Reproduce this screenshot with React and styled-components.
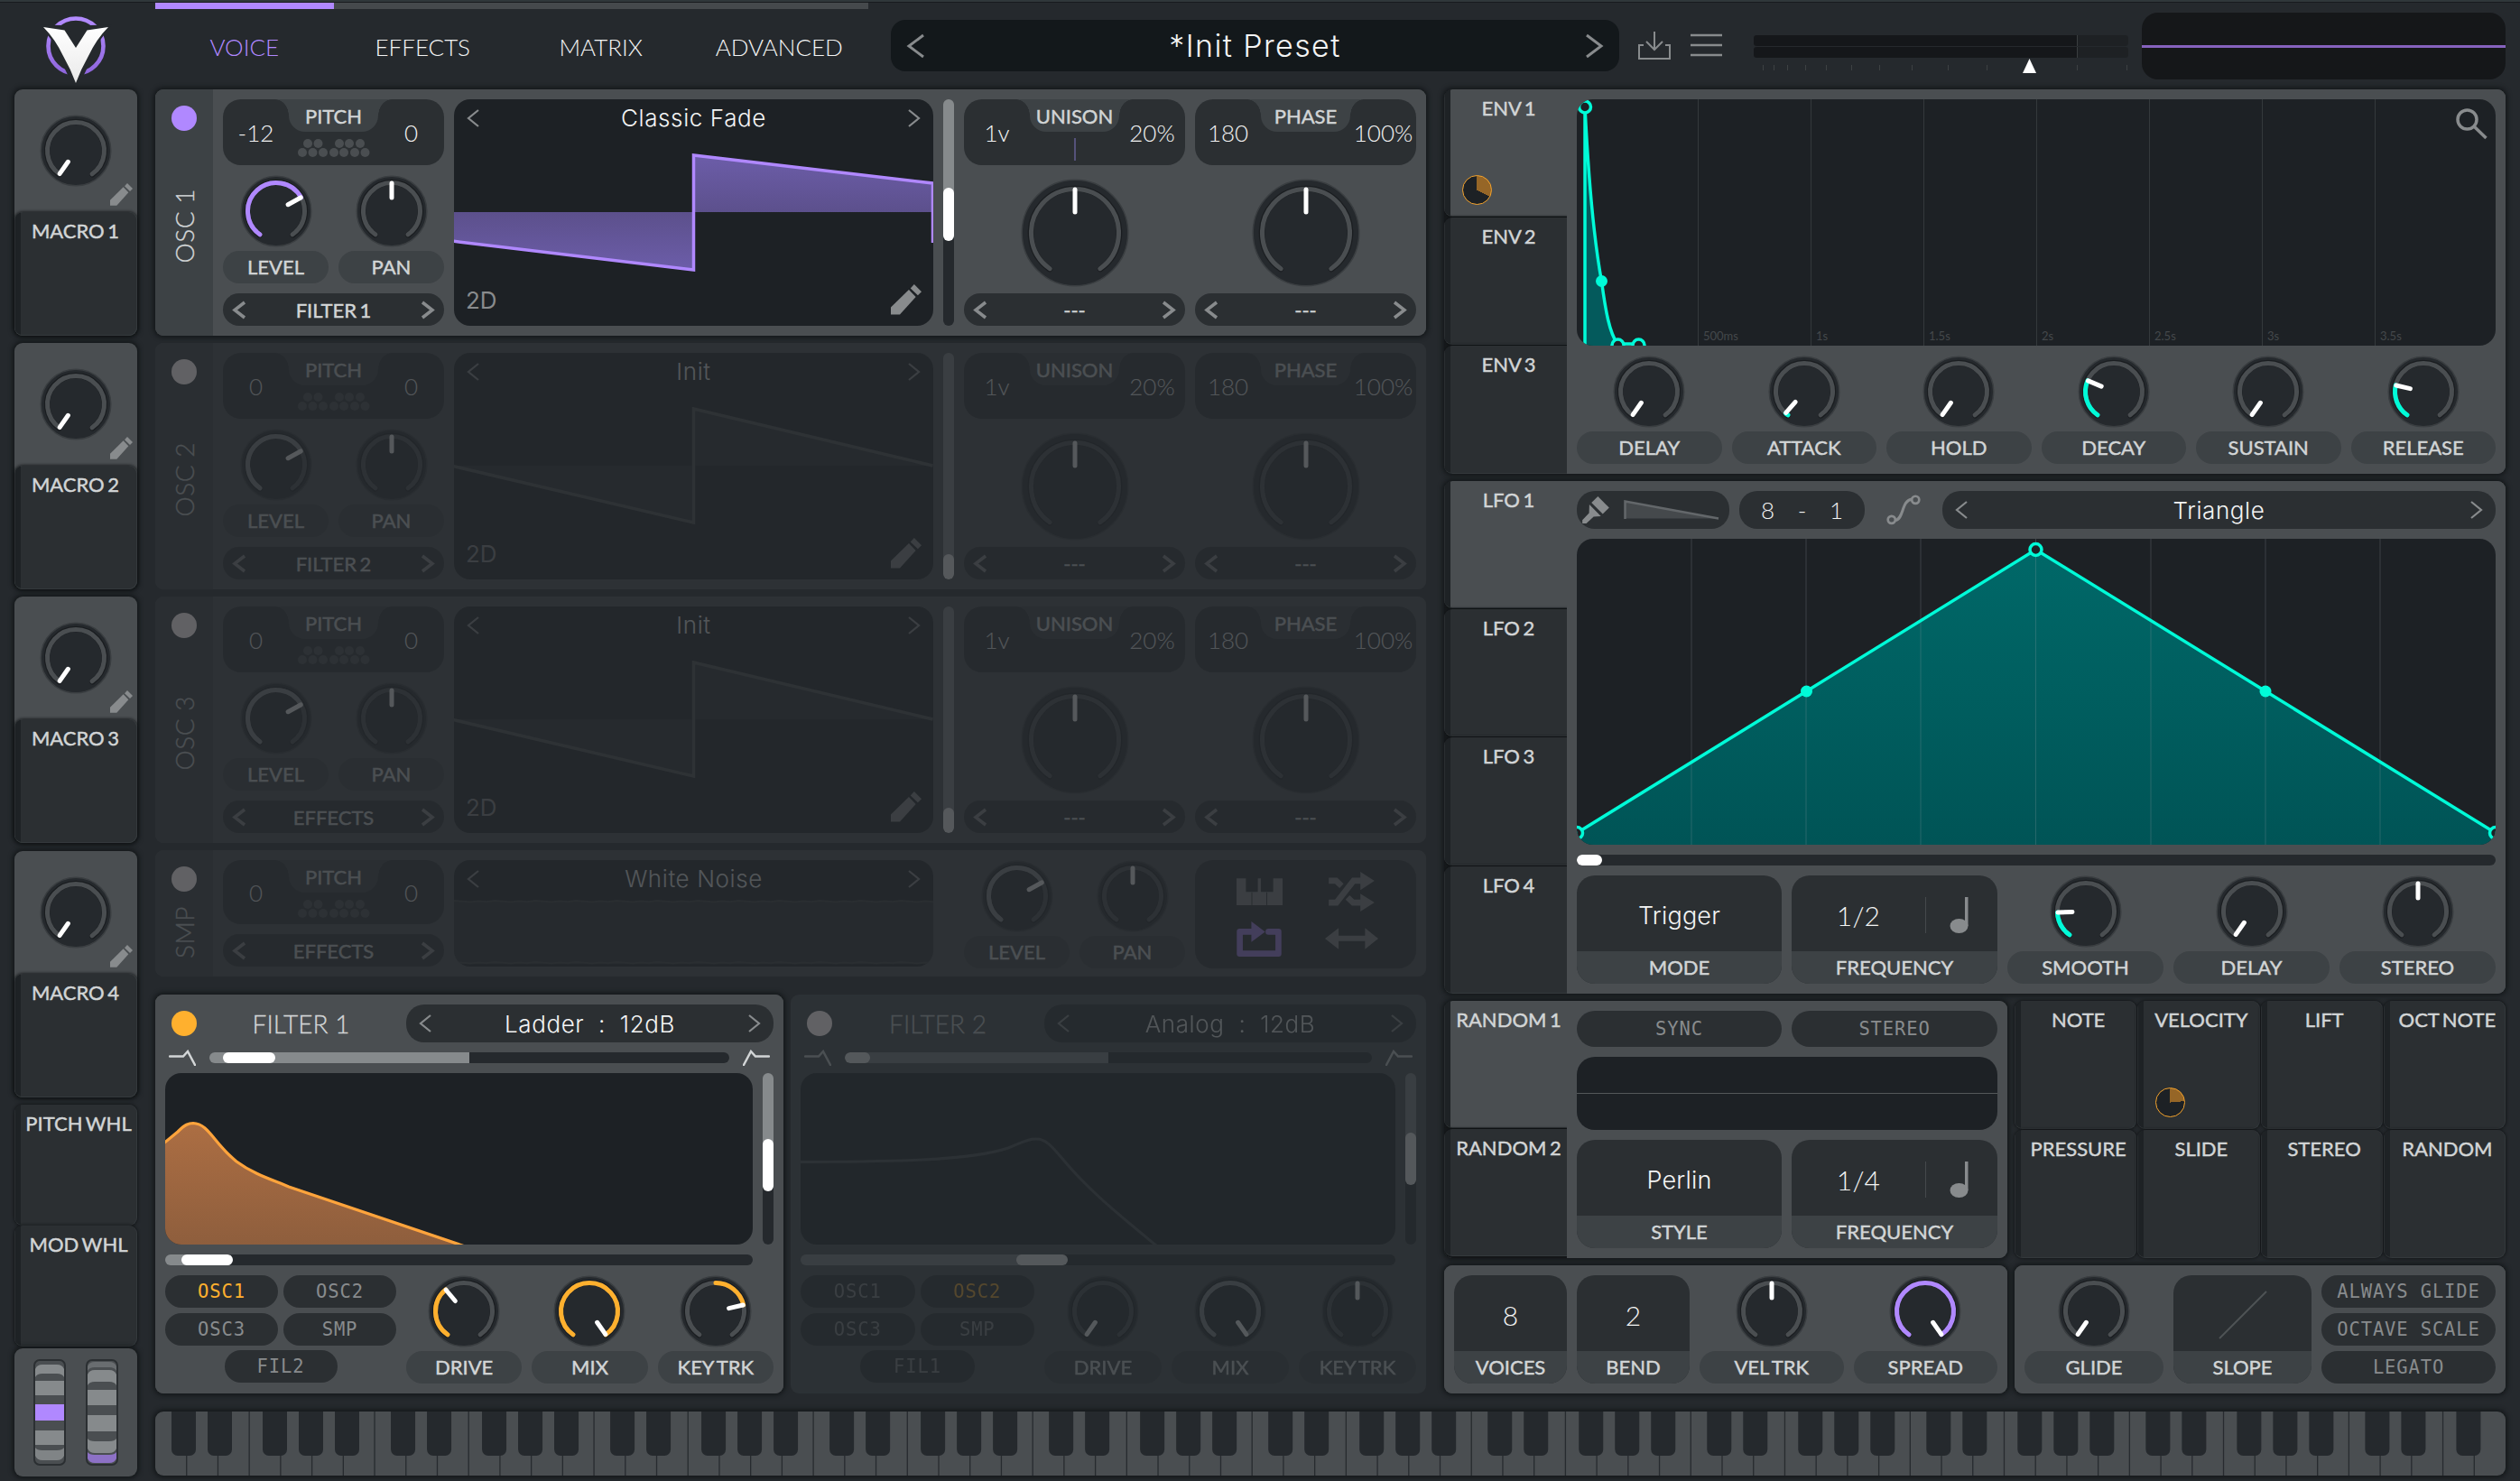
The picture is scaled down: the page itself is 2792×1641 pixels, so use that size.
import React from "react";
import styled, { createGlobalStyle, css } from "styled-components";

const colors = {
  background: "#25292d",
  panel: "#4a4e51",
  side: "#3d4245",
  body: "#2b2f32",
  display: "#1d2125",
  label: "#d2d5d6",
  text: "#f3f4f4",
  icon: "#888b8d",
  purple: "#b088ff",
  orange: "#ffb02e",
  teal: "#00fbd8",
};

const fonts = {
  label: `Lato, "Liberation Sans", sans-serif`,
  value: `Inter, "Liberation Sans", sans-serif`,
  mono: `"DejaVu Sans Mono", "Liberation Mono", monospace`,
};

const GlobalStyle = createGlobalStyle`
  * {
    box-sizing: border-box;
  }
  body {
    margin: 0;
    background: ${colors.background};
    color: ${colors.label};
    font-family: ${fonts.label};
  }
  svg {
    display: block;
    flex: none;
  }
`;

// Lato has no medium cut, a hairline stroke stands in for it
const labelText = css`
  font-family: ${fonts.label};
  font-size: 22px;
  font-weight: 400;
  letter-spacing: 0;
  word-spacing: -2px;
  -webkit-text-stroke: 0.45px currentColor;
  white-space: nowrap;
`;

const SApp = styled.div`
  width: 2792px;
  height: 1641px;
  overflow: hidden;
  background: ${colors.background};
  border-top: 2px solid #30373a;
`;

/* header */

const SHeader = styled.header`
  display: flex;
  align-items: flex-start;
  height: 97px;
  border-top: 1px solid #181b1e;
`;

const SLogo = styled.div`
  width: 172px;
  padding: 11px 0 0 44px;
`;

const STabs = styled.nav`
  display: flex;
  width: 790px;
`;

const STab = styled.div`
  flex: 1;
  height: 96px;
  border-top: 7px solid ${(p) => (p.$active ? colors.purple : "#45494c")};
  color: ${(p) => (p.$active ? colors.purple : colors.text)};
  font-size: 26px;
  font-weight: 300;
  line-height: 84px;
  text-align: center;
`;

const SPreset = styled.div`
  display: flex;
  align-items: center;
  justify-content: space-between;
  width: 807px;
  height: 57px;
  margin: 19px 0 0 25px;
  padding: 0 17px;
  border-radius: 16px;
  background: #13181b;
  color: ${colors.text};
  font-family: ${fonts.value};
  font-size: 34px;
  font-weight: 300;
  letter-spacing: 1.4px;
`;

const SHeaderIcons = styled.div`
  display: flex;
  gap: 22px;
  margin: 32px 35px 0 21px;
`;

const SMeter = styled.div`
  width: 415px;
  margin-top: 36px;
`;

const SMeterBar = styled.div`
  height: 12px;
  margin-bottom: 1px;
  border-radius: 3px;
  background: linear-gradient(90deg, #15171a 358px, #3a3e40 358px, #3a3e40 359px, #1e2124 359px);
`;

const SScope = styled.div`
  display: flex;
  align-items: center;
  width: 403px;
  height: 74px;
  margin: 11px 0 0 15px;
  border-radius: 18px;
  background: #151719;
`;

const SScopeLine = styled.div`
  width: 100%;
  height: 3px;
  background: #8562bd;
`;

/* frame */

const SFrame = styled.main`
  display: flex;
  gap: 20px;
  padding: 0 16px;
`;

const SMacros = styled.div`
  width: 136px;
`;

const SWork = styled.div`
  width: 2604px;
`;

const SColumns = styled.div`
  display: flex;
  gap: 20px;
  height: 1445px;
`;

const SVoice = styled.div`
  display: flex;
  flex-direction: column;
  gap: 8px;
  width: 1408px;
`;

const SMods = styled.div`
  display: flex;
  flex-direction: column;
  gap: 8px;
  width: 1176px;
`;

const SRow = styled.div`
  display: flex;
  gap: ${(p) => p.$gap ?? 11}px;
  margin-top: ${(p) => p.$top ?? 0}px;
`;

const SStack = styled.div`
  display: flex;
  flex-direction: column;
  gap: 11px;
  width: ${(p) => (p.$w ? `${p.$w}px` : "auto")};
`;

const SPanel = styled.section`
  display: flex;
  width: ${(p) => (p.$w ? `${p.$w}px` : "100%")};
  height: ${(p) => p.$h}px;
  overflow: hidden;
  border-radius: 9px;
  background: ${colors.panel};
  box-shadow: 0 0 5px 2px rgba(14, 17, 19, 0.75);
`;

const SContent = styled.div`
  display: flex;
  flex-direction: column;
  gap: 11px;
  flex: 1;
  padding: 11px;
  background: ${colors.panel};
`;

const SMacro = styled.div`
  height: 273px;
  margin-bottom: ${(p) => p.$gap}px;
  border-radius: 9px;
  background: ${colors.panel};
  box-shadow: 0 0 5px 2px rgba(14, 17, 19, 0.75);
`;

const SMacroKnob = styled.div`
  display: flex;
  align-items: flex-end;
  justify-content: flex-end;
  height: 136px;
  padding: 0 5px 7px 28px;
`;

const SMacroDial = styled.div`
  margin: 0 -2px 21px 0;
`;

const STile = styled.div`
  display: flex;
  flex-direction: column;
  justify-content: space-between;
  height: ${(p) => p.$h}px;
  padding: 8px 0 12px ${(p) => (p.$flush ? 0 : 7)}px;
  border-radius: 9px;
  border-right: 1px solid #34393c;
  border-bottom: 1px solid #34393c;
  background: linear-gradient(
    90deg,
    #2a2e31 1px,
    #1e2225 1px,
    #1e2225 7px,
    ${(p) => (p.$active ? colors.panel : colors.body)} 7px
  );
  box-shadow: 0 0 3px 1px rgba(14, 17, 19, 0.7);
  line-height: 26px;
  text-align: center;
  ${labelText}
`;

const STabColumn = styled.div`
  display: flex;
  flex-direction: column;
  gap: 1px;
  width: 136px;
  background: #171a1d;

  ${STile} {
    border-radius: 9px 0 0 9px;
    border-right: ${(p) => (p.$joined ? "0" : "1px solid #34393c")};
  }
`;

const SPie = styled.div`
  width: 33px;
  height: 33px;
  margin-left: 13px;
  border: 1.5px solid #f5a32c;
  border-radius: 50%;
  background: conic-gradient(#966627 ${(p) => p.$angle}deg, ${colors.display} 0);
`;

const SModGrid = styled.div`
  display: grid;
  grid-template-columns: repeat(4, 1fr);
  gap: 1px;
  width: 544px;
`;

const SWheels = styled.div`
  display: flex;
  gap: 22px;
  height: 142px;
  margin-top: 2px;
  padding: 12px 21px;
  border-radius: 9px;
  background: ${colors.panel};
  box-shadow: 0 0 5px 2px rgba(14, 17, 19, 0.75);
`;

/* controls */

const SSlot = styled.div`
  display: grid;
  width: ${(p) => (p.$w ? `${p.$w}px` : "100%")};

  > * {
    grid-area: 1 / 1;
  }
`;

const SFade = styled.div`
  opacity: ${(p) => (p.$off ? 0.22 : 1)};

  ${SPanel} {
    ${(p) => p.$off && "box-shadow: none;"}
  }
`;

const SPower = styled.div`
  width: 28px;
  height: 28px;
  margin: 18px;
  border-radius: 50%;
  background: ${(p) => p.$color};
  z-index: 1;
`;

const SSide = styled.div`
  display: flex;
  align-items: center;
  justify-content: center;
  width: 64px;
  padding-top: ${(p) => p.$push}px;
  background: ${colors.side};
`;

const SSideText = styled.span`
  writing-mode: vertical-rl;
  transform: rotate(180deg);
  font-size: 28px;
  font-weight: 300;
  line-height: 34px;
  letter-spacing: 0.5px;
  -webkit-text-stroke: 0.3px currentColor;
`;

const SPill = styled.div`
  width: 100%;
  height: 36px;
  border-radius: 18px;
  background: ${colors.side};
  line-height: 36px;
  text-align: center;
  ${labelText}
`;

const SKnobCell = styled.div`
  display: flex;
  flex: 1;
  flex-direction: column;
  align-items: center;
  gap: 4px;
`;

const SBigKnob = styled.div`
  display: flex;
  justify-content: center;
  height: 120px;
  margin: 4px 0 -4px;
`;

const valueText = css`
  color: ${colors.text};
  font-family: ${fonts.value};
  font-size: 26px;
  font-weight: 300;
  letter-spacing: 0.6px;
`;

const SSelector = styled.div`
  display: flex;
  align-items: center;
  justify-content: space-between;
  flex: ${(p) => (p.$grow ? 1 : "none")};
  height: ${(p) => p.$h ?? 36}px;
  padding: 0 ${(p) => (p.$value ? 13 : 10)}px;
  border-radius: 20px;
  background: ${(p) => (p.$bare ? "transparent" : colors.body)};
  ${(p) => (p.$value ? valueText : labelText)}
  white-space: pre;
`;

const SValueBox = styled.div`
  display: grid;
  grid-template-columns: 73px 99px 73px;
  height: ${(p) => p.$h}px;
  border-radius: 20px;
  background: ${colors.body};
  color: ${colors.text};
  font-size: 26px;
  font-weight: 300;
  line-height: ${(p) => p.$h + 1}px;
  text-align: center;
`;

const SNotch = styled.div`
  display: flex;
  flex-direction: column;
  align-items: center;
  gap: 7px;
`;

const SNotchLabel = styled.div`
  display: flex;
  justify-content: center;
  width: 99px;
  height: 36px;
  border-radius: 0 0 18px 18px;
  background: ${colors.side};
  color: ${colors.label};
  line-height: 37px;
  ${labelText}

  &::before,
  &::after {
    content: "";
    flex: none;
    width: 15px;
    height: 18px;
  }
  &::before {
    margin-left: -15px;
    margin-right: auto;
    background: radial-gradient(ellipse 15px 18px at 0 100%, transparent 97%, ${colors.side} 100%);
  }
  &::after {
    margin-right: -15px;
    margin-left: auto;
    background: radial-gradient(ellipse 15px 18px at 100% 100%, transparent 97%, ${colors.side} 100%);
  }
`;

const SUnisonTick = styled.div`
  width: 2px;
  height: 25px;
  background: #55527a;
`;

const SDisplay = styled.div`
  display: grid;
  flex: none;
  width: ${(p) => (p.$w ? `${p.$w}px` : "100%")};
  height: ${(p) => p.$h}px;
  overflow: hidden;
  border-radius: 18px;
  background: ${colors.display};

  > * {
    grid-area: 1 / 1;
  }
`;

const SDisplayFrame = styled.div`
  display: flex;
  flex-direction: column;
  justify-content: space-between;
  z-index: 1;
`;

const SDisplayFoot = styled.div`
  display: flex;
  align-items: center;
  justify-content: space-between;
  padding: 0 13px;
  margin-bottom: 12px;
  color: ${colors.icon};
  font-family: ${fonts.value};
  font-size: 26px;
`;

const SRail = styled.div`
  flex: ${(p) => (p.$vertical || p.$w ? "none" : 1)};
  width: ${(p) => (p.$vertical ? "12px" : p.$w ? `${p.$w}px` : "auto")};
  height: ${(p) => (p.$vertical ? "auto" : "12px")};
  border-radius: 6px;
  overflow: hidden;
  background: linear-gradient(
    ${(p) => (p.$vertical ? 180 : 90)}deg,
    #868a8c ${(p) => p.$fill}px,
    ${colors.background} ${(p) => p.$fill}px
  );
`;

const SThumb = styled.div`
  width: ${(p) => (p.$vertical ? 12 : p.$size)}px;
  height: ${(p) => (p.$vertical ? p.$size : 12)}px;
  margin: ${(p) => (p.$vertical ? `${p.$at}px 0 0` : `0 0 0 ${p.$at}px`)};
  border-radius: 6px;
  background: #fff;
`;

const SSampleButtons = styled.div`
  display: grid;
  grid-template-columns: 1fr 1fr;
  place-items: center;
  width: 245px;
  padding: 8px 20px;
  border-radius: 20px;
  background: ${colors.body};
`;

const SFilterHead = styled.div`
  display: flex;
  align-items: center;
  gap: 11px;
`;

const SFilterTitle = styled.div`
  width: ${(p) => p.$w}px;
  padding-left: 45px;
  font-size: 28px;
  font-weight: 300;
  text-align: center;
  -webkit-text-stroke: 0.3px currentColor;
`;

const SFilterBlend = styled.div`
  display: flex;
  align-items: center;
  justify-content: space-between;
  height: 12px;
  padding: 0 4px;
`;

const SRouting = styled.div`
  display: flex;
  flex-wrap: wrap;
  justify-content: center;
  gap: 5px 6px;
  width: ${(p) => p.$w}px;
`;

const SToggle = styled.div`
  width: ${(p) => p.$w};
  height: ${(p) => p.$h ?? 36}px;
  border-radius: 20px;
  background: ${colors.body};
  color: ${(p) => (p.$active ? colors.orange : colors.icon)};
  font-family: ${fonts.mono};
  font-size: 20.5px;
  letter-spacing: 0.85px;
  line-height: ${(p) => p.$h ?? 36}px;
  text-align: center;
`;

const SToggles = styled.div`
  display: flex;
  flex-direction: column;
  justify-content: space-between;
  width: 193px;
`;

const SBox = styled.div`
  display: flex;
  flex-direction: column;
  width: ${(p) => p.$w}px;
  height: 120px;
  overflow: hidden;
  border-radius: 20px;
  background: ${colors.body};

  ${SPill} {
    border-radius: 0;
  }
`;

const SBoxValue = styled.div`
  display: flex;
  flex: 1;
  align-items: center;
  justify-content: center;
  padding-top: 4px;
  color: ${colors.text};
  font-family: ${(p) => (p.$digits ? fonts.label : fonts.value)};
  font-size: ${(p) => (p.$digits ? 30 : 27)}px;
  font-weight: 300;
  letter-spacing: 0.2px;
`;

const STempo = styled.div`
  width: 149px;
  border-right: 1px solid #45494c;
  line-height: 40px;
  text-align: center;
`;

const STempoNote = styled.div`
  display: flex;
  flex: 1;
  justify-content: center;
  padding-right: 6px;
`;

const SLfoPill = styled.div`
  display: flex;
  align-items: center;
  justify-content: space-between;
  width: ${(p) => p.$w}px;
  padding: ${(p) => p.$pad};
  border-radius: 20px;
  background: ${colors.body};
  color: ${colors.text};
  font-size: 26px;
  font-weight: 300;
`;

const SCurveIcon = styled.div`
  display: flex;
  align-items: center;
  justify-content: center;
  width: 64px;
`;

const SRandomView = styled.div`
  display: flex;
  align-items: center;
  height: 81px;
  border-radius: 20px;
  background: ${colors.display};
`;

const SRandomLine = styled.div`
  width: 100%;
  height: 1px;
  background: #54585a;
`;

const SKeyboard = styled.div`
  margin-top: 20px;
  height: 71px;
  overflow: hidden;
  border-radius: 9px;
  background: ${colors.panel};
  box-shadow: 0 0 5px 2px rgba(14, 17, 19, 0.75);
`;

/* drawings */

const SWEEP = 145;

const polar = (c, r, deg) => {
  const a = (deg * Math.PI) / 180;
  return [c + r * Math.sin(a), c - r * Math.cos(a)];
};

const arc = (c, r, from, to) => {
  const [x1, y1] = polar(c, r, from);
  const [x2, y2] = polar(c, r, to);
  return `M${x1} ${y1}A${r} ${r} 0 ${to - from > 180 ? 1 : 0} 1 ${x2} ${y2}`;
};

const Knob = ({ angle = -SWEEP, from = -SWEEP, color, big }) => {
  const size = big ? 120 : 80;
  const c = size / 2;
  const r = big ? 48.5 : 31.5;
  const [x1, y1] = polar(c, big ? 48 : 31, angle);
  const [x2, y2] = polar(c, big ? 23 : 15, angle);
  return (
    <svg width={size} height={size} fill="none" strokeLinecap="round">
      <circle cx={c} cy={c} r={c - 1.2} fill={colors.background} stroke="#3a3e41" strokeWidth="1.5" />
      <path d={arc(c, r + 0.5, -SWEEP, SWEEP)} stroke="#1a1d20" strokeWidth="6.5" />
      <path d={arc(c, r, -SWEEP, SWEEP)} stroke={colors.panel} strokeWidth="5" />
      {color && angle > from && <path d={arc(c, r, from, angle)} stroke={color} strokeWidth="5" />}
      <path d={`M${x1} ${y1}L${x2} ${y2}`} stroke="#fff" strokeWidth="5" />
    </svg>
  );
};

const KnobCell = ({ label, ...knob }) => (
  <SKnobCell>
    <Knob {...knob} />
    <SPill>{label}</SPill>
  </SKnobCell>
);

const Arrow = ({ right, w = 12, h = 17, stroke = 3.5 }) => (
  <svg width={w + 4} height={h + 4} fill="none" stroke={colors.icon} strokeWidth={stroke}>
    <path
      d={
        right
          ? `M2 2L${w + 1} ${h / 2 + 2}L2 ${h + 2}`
          : `M${w + 2} 2L3 ${h / 2 + 2}L${w + 2} ${h + 2}`
      }
    />
  </svg>
);

const Selector = ({ children, arrow, ...rest }) => (
  <SSelector {...rest}>
    <Arrow {...arrow} />
    <span>{children}</span>
    <Arrow right {...arrow} />
  </SSelector>
);

const thinArrow = { w: 12, h: 18, stroke: 2.2 };

const Pencil = ({ size }) => (
  <svg width={size} height={size} viewBox="0 0 75 75" fill={colors.icon}>
    <path d="M0 56L44 13L61 31L22 74H0Z" />
    <path d="M48 10L57 0L75 18L66 27Z" />
  </svg>
);

const Logo = () => (
  <svg width="80" height="84" viewBox="0 0 80 84">
    <defs>
      <linearGradient id="ring" x1="0" y1="0" x2="0" y2="1">
        <stop offset="0" stopColor="#b38bff" />
        <stop offset="1" stopColor="#8f66dd" />
      </linearGradient>
      <linearGradient id="vee" x1="0" y1="0" x2="0" y2="1">
        <stop offset="0" stopColor="#fff" />
        <stop offset="1" stopColor="#e9e9e9" />
      </linearGradient>
    </defs>
    <circle cx="40" cy="37" r="30.5" fill="none" stroke="url(#ring)" strokeWidth="4.6" />
    <path
      d="M0 13.500L26 14L40 26L54 14L80 13.500L68 29L49 69L40 84L31 69L12 29Z"
      fill={colors.background}
    />
    <path
      d="M4 16L27.500 19.500L40 39L52.500 19.500L76 16Q63 29 54 48Q46 62 40 78Q34 62 26 48Q17 29 4 16Z"
      fill="url(#vee)"
    />
  </svg>
);

const SaveIcon = () => (
  <svg width="36" height="32" fill="none" stroke={colors.icon} strokeWidth="2">
    <path d="M18 0V20M9 11L18 20L27 11M6 15H1V30H35V15H30" />
  </svg>
);

const MenuIcon = () => (
  <svg width="35" height="32" stroke={colors.icon} strokeWidth="2.5">
    <path d="M0 4H35M0 15H35M0 26H35" />
  </svg>
);

const METER_TICKS = [10, 22, 37, 57, 80, 108, 139, 175, 215, 258, 358, 413];

const MeterScale = () => (
  <svg width="415" height="18">
    {METER_TICKS.map((x) => (
      <path key={x} d={`M${x + 0.5} 7V13`} stroke="#3d4143" />
    ))}
    <path d="M298 16L305.500 0L313 16Z" fill="#fff" />
  </svg>
);

const OscWave = ({ left, low, top, right, on }) => (
  <svg width="531" height="251">
    <defs>
      <linearGradient id="osc" gradientUnits="userSpaceOnUse" x1="0" y1="62" x2="0" y2="189">
        <stop offset="0" stopColor="#6c5da9" />
        <stop offset="0.5" stopColor="#5c508c" />
        <stop offset="1" stopColor="#6c5da9" />
      </linearGradient>
    </defs>
    <path
      d={`M0 125V${left}L265.500 ${low}V${top}L531 ${right}V125Z`}
      fill={on ? "url(#osc)" : "rgba(120,124,126,0.15)"}
    />
    <path
      d={`M-3 ${left}L265.500 ${low}V${top}L530.500 ${right}${on ? "V159" : ""}`}
      fill="none"
      stroke={on ? colors.purple : "#4e5254"}
      strokeWidth="3.5"
    />
  </svg>
);

const noise = (y) =>
  Array.from({ length: 60 }, (_, i) => `${i ? "L" : "M"}${i * 9} ${y + ((i * 7) % 5) * 0.4}`).join("");

const NoiseWave = () => (
  <svg width="531" height="118" fill="none" stroke="#3c4043" strokeWidth="2">
    <path d="M0 46H531V115H0Z" fill="rgba(120,124,126,0.15)" stroke="none" />
    <path d={noise(45)} />
    <path d={noise(113)} />
  </svg>
);

const KEY_DOTS = [
  [7, 6],
  [18.5, 6],
  [42, 6],
  [53, 6],
  [65, 6],
  [1, 16],
  [12.5, 16],
  [24, 16],
  [36, 16],
  [47, 16],
  [59, 16],
  [70.5, 16],
];

const KeyDots = () => (
  <svg width="82" height="22" viewBox="-5 0 82 22" fill="#4a4e51">
    {KEY_DOTS.map(([x, y]) => (
      <circle key={`${x}-${y}`} cx={x} cy={y} r="5" />
    ))}
  </svg>
);

const KeysIcon = () => (
  <svg width="51" height="30" viewBox="0 0 108 63" fill={colors.icon}>
    <path d="M0 0H22V32H50V0H57V32H86V0H108V63H0Z" />
    <path d="M36 33V63M71 33V63" stroke={colors.body} strokeWidth="2" />
  </svg>
);

const ShuffleIcon = () => (
  <svg width="51" height="44" viewBox="0 0 107 93" fill="none" stroke={colors.icon} strokeWidth="14">
    <path d="M0 21H17L30 33M0 72H18L58 21H76M44 60L57 72H76" />
    <path d="M74 0L107 21L74 43ZM74 51L107 72L74 93Z" fill={colors.icon} stroke="none" />
  </svg>
);

const LoopIcon = () => (
  <svg width="50" height="39" viewBox="0 0 104 82" fill="none" stroke={colors.purple} strokeWidth="14">
    <path d="M34 24H7V75H97V24H74" strokeLinecap="round" strokeLinejoin="round" />
    <path d="M34 0L66 24L34 48Z" fill={colors.purple} stroke="none" />
  </svg>
);

const BounceIcon = () => (
  <svg width="59" height="24" viewBox="0 0 125 50" fill={colors.icon}>
    <path d="M0 25L32 0V18H94V0L125 25L94 50V31H32V50Z" />
  </svg>
);

const LowIcon = ({ flip }) => (
  <svg width="30" height="18" fill="none" stroke="#d2d5d6" strokeWidth="2.5" strokeLinecap="round">
    <path d={flip ? "M1 17L9 2L14 7.500H29" : "M1 7.500H16L21 2L29 17"} />
  </svg>
);

const LADDER = "M-3 79L14 65C22 57 26 55.500 31 55.500C48 56 54 78 79 98C98 112 118 118 137 126L332 192";

const LadderCurve = () => (
  <svg width="651" height="190">
    <defs>
      <linearGradient id="filter" x1="0" y1="0" x2="0" y2="1">
        <stop offset="0" stopColor="#ac6e43" />
        <stop offset="1" stopColor="#8e5e3d" />
      </linearGradient>
    </defs>
    <path d={`${LADDER}H-3Z`} fill="url(#filter)" />
    <path d={LADDER} fill="none" stroke="#ffa43c" strokeWidth="3.2" />
  </svg>
);

const AnalogCurve = () => (
  <svg width="659" height="190" fill="none" stroke="#4a4e51" strokeWidth="3">
    <path d="M0 98.500C90 98 185 98 230 83C246 77 250 73 261 73C277 73 284 91 310 117C334 142 360 163 394 191" />
  </svg>
);

const EnvelopeGraph = () => (
  <svg width="1018" height="273" fontSize="13" fill="#44484b">
    {["500ms", "1s", "1.5s", "2s", "2.5s", "3s", "3.5s"].map((t, i) => (
      <g key={t}>
        <path d={`M${134.5 + i * 125} 0V273`} stroke="#34393c" />
        <text x={140 + i * 125} y="267">
          {t}
        </text>
      </g>
    ))}
    <path d="M9 8C13 90 17 150 27 202C32 235 37 255 44 273H9Z" fill="#045a5c" />
    <g fill={colors.display} stroke={colors.teal} strokeWidth="3.5">
      <path d="M9 273V8C13 90 18 150 27.500 202C32 235 36 258 45 271H68" fill="none" />
      <circle cx="9" cy="8.500" r="6.500" />
      <circle cx="45.500" cy="272.500" r="6.500" />
      <circle cx="68.500" cy="272.500" r="6.500" />
    </g>
    <circle cx="27.500" cy="201.500" r="6.500" fill={colors.teal} />
    <g fill="none" stroke={colors.icon} strokeWidth="3.5">
      <circle cx="986.500" cy="22.500" r="10.500" />
      <path d="M994 30L1007.500 43" />
    </g>
  </svg>
);

const GRID_LINES = [127, 254, 381, 508.5, 636, 763, 890];

const LfoGraph = () => (
  <svg width="1018" height="339">
    <defs>
      <linearGradient id="lfo" x1="0" y1="0" x2="0" y2="1">
        <stop offset="0" stopColor="#006868" />
        <stop offset="1" stopColor="#005456" />
      </linearGradient>
    </defs>
    <path d="M0 326L508.500 12L1018 326V339H0Z" fill="url(#lfo)" />
    {GRID_LINES.map((x) => (
      <path key={x} d={`M${x} 0V339`} stroke="rgba(150,165,168,0.25)" />
    ))}
    <g fill={colors.display} stroke={colors.teal} strokeWidth="3.5">
      <path d="M0 326L508.500 12L1018 326" fill="none" />
      <circle cx="0" cy="326" r="6.500" />
      <circle cx="508.500" cy="12" r="6.500" />
      <circle cx="1018" cy="326" r="6.500" />
    </g>
    <circle cx="254.500" cy="169" r="6.500" fill={colors.teal} />
    <circle cx="763" cy="169" r="6.500" fill={colors.teal} />
  </svg>
);

const BrushIcon = () => (
  <svg width="30" height="30" viewBox="0 0 88 89" fill={colors.icon}>
    <path d="M51 0L88 37L67 58L30 21Z" />
    <path d="M23 27L61 65L37 67L13 89H0V78L22 55Z" />
  </svg>
);

const FadeShape = () => (
  <svg width="106" height="22">
    <path d="M1.500 1.500L105 20.500H1.500Z" fill="#45494c" />
    <path d="M1.500 21V1.500L105 20.500" fill="none" stroke="#63676a" strokeWidth="2.5" />
  </svg>
);

const SmoothIcon = () => (
  <svg width="38" height="34" viewBox="0 0 112 100" fill="none" stroke={colors.icon}>
    <circle cx="17" cy="82" r="12" strokeWidth="8" />
    <circle cx="95" cy="17" r="12" strokeWidth="8" />
    <path d="M29 84C58 80 48 18 84 15" strokeWidth="9" />
  </svg>
);

const NoteIcon = () => (
  <svg width="21" height="41" fill={colors.icon}>
    <ellipse cx="10.500" cy="32" rx="10" ry="8" />
    <path d="M17 0H20.500V32H17Z" />
  </svg>
);

const SlopeIcon = () => (
  <svg width="54" height="54" stroke="#4f5355" strokeWidth="2">
    <path d="M1 53L53 1" />
  </svg>
);

const BLACK_KEYS = [18, 58, 119, 159, 199];
const WHITE_KEY = 2604 / 75;

const Keys = () => (
  <svg width="2604" height="71">
    {Array.from({ length: 74 }, (_, i) => {
      const full = (i + 1) % 7 === 0 || (i + 1) % 7 === 3;
      const x = (i + 1) * WHITE_KEY;
      return <path key={i} d={`M${x} ${full ? 0 : 48}V71`} stroke="#272b2f" strokeWidth="1.3" />;
    })}
    {Array.from({ length: 11 }, (_, octave) =>
      BLACK_KEYS.slice(0, octave === 10 ? 3 : 5).map((x) => (
        <rect
          key={`${octave}-${x}`}
          x={octave * 7 * WHITE_KEY + x}
          y="-10"
          width="27"
          height="59"
          rx="7"
          fill={colors.background}
        />
      ))
    )}
  </svg>
);

const WHEELS = [
  [
    [6, 10, "#868a8c", -1],
    [24, 16, "#868a8c", 0],
    [50, 18, colors.purple, 0],
    [79, 16, "#868a8c", 0],
    [101, 11, "#808486", 1],
  ],
  [
    [3, 6, "#696d70", -1],
    [12, 13, "#868a8c", -1],
    [34, 17, "#868a8c", 0],
    [62, 18, "#868a8c", 0],
    [91, 13, "#868a8c", 1],
    [106, 9, "#8d71c6", 1],
  ],
];

const Wheel = ({ bands }) => (
  <svg width="36" height="118">
    <rect x="1" y="1" width="34" height="116" rx="6" fill={colors.panel} stroke="#2b2f32" strokeWidth="2" />
    {bands.map(([y, h, fill, bend]) => {
      const top = bend < 0 ? 5 : 0;
      const d =
        bend < 0
          ? `M2 ${y + h + 4}V${y + top}Q4 ${y} 10 ${y}H26Q32 ${y} 34 ${y + top}V${y + h + 4}Q32 ${y + h} 26 ${y + h}H10Q4 ${y + h} 2 ${y + h + 4}Z`
          : bend > 0
            ? `M2 ${y - 3}Q4 ${y} 10 ${y}H26Q32 ${y} 34 ${y - 3}V${y + h - 5}Q32 ${y + h} 26 ${y + h}H10Q4 ${y + h} 2 ${y + h - 5}Z`
            : `M2 ${y}H34V${y + h}H2Z`;
      return <path key={y} d={d} fill={fill} />;
    })}
  </svg>
);

/* modules */

const ValueBox = ({ title, left, right, h = 73, children }) => (
  <SValueBox $h={h}>
    <span>{left}</span>
    <SNotch>
      <SNotchLabel>{title}</SNotchLabel>
      {children}
    </SNotch>
    <span>{right}</span>
  </SValueBox>
);

const VoiceKnob = ({ title, left, right, children }) => (
  <SStack $w={245}>
    <ValueBox title={title} left={left} right={right}>
      {children}
    </ValueBox>
    <SBigKnob>
      <Knob big angle={0} />
    </SBigKnob>
    <Selector>---</Selector>
  </SStack>
);

const Oscillator = ({ name, on, transpose, output, wave, points, frame, fill }) => (
  <SSlot>
    <SPower $color={on ? colors.purple : "#616164"} />
    <SFade $off={!on}>
      <SPanel $h={273}>
        <SSide $push={30}>
          <SSideText>{name}</SSideText>
        </SSide>
        <SContent>
          <SRow>
            <SStack $w={245}>
              <ValueBox title="PITCH" left={transpose} right="0">
                <KeyDots />
              </ValueBox>
              <SRow>
                <KnobCell label="LEVEL" angle={61} color={on ? colors.purple : "#868a8c"} />
                <KnobCell label="PAN" angle={0} />
              </SRow>
              <Selector>{output}</Selector>
            </SStack>
            <SDisplay $w={531} $h={251}>
              <OscWave on={on} {...points} />
              <SDisplayFrame>
                <Selector $value $bare $h={41} arrow={thinArrow}>
                  {wave}
                </Selector>
                <SDisplayFoot>
                  <span>2D</span>
                  <Pencil size={34} />
                </SDisplayFoot>
              </SDisplayFrame>
            </SDisplay>
            <SRail $vertical $fill={fill}>
              <SThumb $vertical $at={frame[0]} $size={frame[1]} />
            </SRail>
            <VoiceKnob title="UNISON" left="1v" right="20%">
              {on && <SUnisonTick />}
            </VoiceKnob>
            <VoiceKnob title="PHASE" left="180" right="100%" />
          </SRow>
        </SContent>
      </SPanel>
    </SFade>
  </SSlot>
);

const Sampler = () => (
  <SSlot>
    <SPower $color="#616164" />
    <SFade $off>
      <SPanel $h={140}>
        <SSide $push={42}>
          <SSideText>SMP</SSideText>
        </SSide>
        <SContent>
          <SRow>
            <SStack $w={245}>
              <ValueBox title="PITCH" left="0" right="0" h={71}>
                <KeyDots />
              </ValueBox>
              <Selector>EFFECTS</Selector>
            </SStack>
            <SDisplay $w={531} $h={118}>
              <NoiseWave />
              <SDisplayFrame>
                <Selector $value $bare $h={41} arrow={thinArrow}>
                  White Noise
                </Selector>
              </SDisplayFrame>
            </SDisplay>
            <SStack $w={12} />
            <SStack $w={245}>
              <SRow>
                <KnobCell label="LEVEL" angle={61} color="#868a8c" />
                <KnobCell label="PAN" angle={0} />
              </SRow>
            </SStack>
            <SSampleButtons>
              <KeysIcon />
              <ShuffleIcon />
              <LoopIcon />
              <BounceIcon />
            </SSampleButtons>
          </SRow>
        </SContent>
      </SPanel>
    </SFade>
  </SSlot>
);

const Filter = ({ name, on, w, left, model, blend, cut, res, active, other, knobs, children }) => (
  <SSlot $w={w}>
    <SPower $color={on ? colors.orange : "#616164"} />
    <SFade $off={!on}>
      <SPanel $h={442}>
        <SContent>
          <SFilterHead>
            <SFilterTitle $w={left}>{name}</SFilterTitle>
            <Selector $value $grow $h={42} arrow={thinArrow}>
              {model}
            </Selector>
          </SFilterHead>
          <SFilterBlend>
            <LowIcon />
            <SRail $w={w - 120} $fill={(w - 120) / 2}>
              <SThumb $at={blend[0]} $size={blend[1]} />
            </SRail>
            <LowIcon flip />
          </SFilterBlend>
          <SRow>
            <SDisplay $w={w - 45} $h={190}>
              {children}
            </SDisplay>
            <SRail $vertical $fill={res[0] + 20}>
              <SThumb $vertical $at={res[0]} $size={res[1]} />
            </SRail>
          </SRow>
          <SRow>
            <SRail $w={w - 45} $fill={cut[0] + 20}>
              <SThumb $at={cut[0]} $size={cut[1]} />
            </SRail>
          </SRow>
          <SRow>
            <SRouting $w={left}>
              {["OSC1", "OSC2", "OSC3", "SMP", other].map((t) => (
                <SToggle key={t} $w={`${(left - 6) / 2}px`} $active={t === active}>
                  {t}
                </SToggle>
              ))}
            </SRouting>
            {knobs.map((k) => (
              <KnobCell key={k.label} {...k} />
            ))}
          </SRow>
        </SContent>
      </SPanel>
    </SFade>
  </SSlot>
);

const ModTabs = ({ names, pie }) => (
  <STabColumn $joined>
    {names.map((n, i) => (
      <STile key={n} $active={i === 0} $h={i === 0 ? 141 : 141.4}>
        {n}
        {pie && i === 0 && <SPie $angle={pie} />}
      </STile>
    ))}
  </STabColumn>
);

const ChoiceBox = ({ label, w, digits, children }) => (
  <SBox $w={w}>
    <SBoxValue $digits={digits}>{children}</SBoxValue>
    <SPill>{label}</SPill>
  </SBox>
);

const FrequencyBox = ({ value }) => (
  <ChoiceBox label="FREQUENCY" w={228} digits>
    <STempo>{value}</STempo>
    <STempoNote>
      <NoteIcon />
    </STempoNote>
  </ChoiceBox>
);

const filterOneKnobs = [
  { label: "DRIVE", angle: -40, color: colors.orange },
  { label: "MIX", angle: 145, color: colors.orange },
  { label: "KEY TRK", angle: 77, from: 0, color: colors.orange },
];

const filterTwoKnobs = [
  { label: "DRIVE" },
  { label: "MIX", angle: 145, color: "#868a8c" },
  { label: "KEY TRK", angle: 0 },
];

const envelopeKnobs = [
  { label: "DELAY" },
  { label: "ATTACK", angle: -139 },
  { label: "HOLD" },
  { label: "DECAY", angle: -67 },
  { label: "SUSTAIN" },
  { label: "RELEASE", angle: -77 },
];

const modSources = ["NOTE", "VELOCITY", "LIFT", "OCT NOTE", "PRESSURE", "SLIDE", "STEREO", "RANDOM"];

const sawPoints = { left: 125, low: 188, top: 62, right: 125 };

const Header = () => (
  <SHeader>
    <SLogo>
      <Logo />
    </SLogo>
    <STabs>
      <STab $active>VOICE</STab>
      <STab>EFFECTS</STab>
      <STab>MATRIX</STab>
      <STab>ADVANCED</STab>
    </STabs>
    <SPreset>
      <Arrow w={17} h={24} stroke={3} />
      <span>*Init Preset</span>
      <Arrow right w={17} h={24} stroke={3} />
    </SPreset>
    <SHeaderIcons>
      <SaveIcon />
      <MenuIcon />
    </SHeaderIcons>
    <SMeter>
      <SMeterBar />
      <SMeterBar />
      <MeterScale />
    </SMeter>
    <SScope>
      <SScopeLine />
    </SScope>
  </SHeader>
);

const MacroColumn = () => (
  <SMacros>
    {[1, 2, 3, 4].map((n) => (
      <SMacro key={n} $gap={n === 1 || n === 4 ? 8 : 8.3}>
        <SMacroKnob>
          <SMacroDial>
            <Knob />
          </SMacroDial>
          <Pencil size={25} />
        </SMacroKnob>
        <STile $flush $h={137}>
          MACRO {n}
        </STile>
      </SMacro>
    ))}
    <STile $h={134}>PITCH WHL</STile>
    <STile $h={134}>MOD WHL</STile>
    <SWheels>
      {WHEELS.map((bands, i) => (
        <Wheel key={i} bands={bands} />
      ))}
    </SWheels>
  </SMacros>
);

const EnvelopePanel = () => (
  <SPanel $h={426}>
    <ModTabs names={["ENV 1", "ENV 2", "ENV 3"]} pie={117} />
    <SContent>
      <SDisplay $h={273}>
        <EnvelopeGraph />
      </SDisplay>
      <SRow>
        {envelopeKnobs.map((k) => (
          <KnobCell key={k.label} color={colors.teal} {...k} />
        ))}
      </SRow>
    </SContent>
  </SPanel>
);

const LfoPanel = () => (
  <SPanel $h={568}>
    <ModTabs names={["LFO 1", "LFO 2", "LFO 3", "LFO 4"]} />
    <SContent>
      <SRow>
        <SLfoPill $w={169} $pad="0 11px 0 6px">
          <BrushIcon />
          <FadeShape />
        </SLfoPill>
        <SLfoPill $w={139} $pad="0 24px">
          <span>8</span>
          <span>-</span>
          <span>1</span>
        </SLfoPill>
        <SCurveIcon>
          <SmoothIcon />
        </SCurveIcon>
        <Selector $value $grow $h={42} arrow={thinArrow}>
          Triangle
        </Selector>
      </SRow>
      <SDisplay $h={339}>
        <LfoGraph />
      </SDisplay>
      <SRow>
        <SRail $fill={10}>
          <SThumb $at={0} $size={28} />
        </SRail>
      </SRow>
      <SRow>
        <ChoiceBox label="MODE" w={227}>
          Trigger
        </ChoiceBox>
        <FrequencyBox value="1/2" />
        <KnobCell label="SMOOTH" angle={-92} color={colors.teal} />
        <KnobCell label="DELAY" />
        <KnobCell label="STEREO" angle={0} />
      </SRow>
    </SContent>
  </SPanel>
);

const RandomPanel = () => (
  <SPanel $w={624} $h={285}>
    <ModTabs names={["RANDOM 1", "RANDOM 2"]} />
    <SContent>
      <SRow>
        <SToggle $w="227px" $h={40}>
          SYNC
        </SToggle>
        <SToggle $w="228px" $h={40}>
          STEREO
        </SToggle>
      </SRow>
      <SRandomView>
        <SRandomLine />
      </SRandomView>
      <SRow>
        <ChoiceBox label="STYLE" w={227}>
          Perlin
        </ChoiceBox>
        <FrequencyBox value="1/4" />
      </SRow>
    </SContent>
  </SPanel>
);

const App = () => (
  <>
    <GlobalStyle />
    <SApp>
      <Header />
      <SFrame>
        <MacroColumn />
        <SWork>
          <SColumns>
            <SVoice>
              <Oscillator
                on
                name="OSC 1"
                transpose="-12"
                output="FILTER 1"
                wave="Classic Fade"
                points={{ left: 157, low: 189, top: 62, right: 93 }}
                frame={[98, 59]}
                fill={120}
              />
              <Oscillator
                name="OSC 2"
                transpose="0"
                output="FILTER 2"
                wave="Init"
                points={sawPoints}
                frame={[223, 28]}
                fill={251}
              />
              <Oscillator
                name="OSC 3"
                transpose="0"
                output="EFFECTS"
                wave="Init"
                points={sawPoints}
                frame={[223, 28]}
                fill={251}
              />
              <Sampler />
              <SRow $gap={8} $top={12}>
                <Filter
                  on
                  name="FILTER 1"
                  w={696}
                  left={256}
                  model="Ladder  :  12dB"
                  blend={[15, 58]}
                  cut={[18, 57]}
                  res={[73, 58]}
                  active="OSC1"
                  other="FIL2"
                  knobs={filterOneKnobs}
                >
                  <LadderCurve />
                </Filter>
                <Filter
                  name="FILTER 2"
                  w={704}
                  left={259}
                  model="Analog  :  12dB"
                  blend={[0, 28]}
                  cut={[239, 57]}
                  res={[66, 58]}
                  active="OSC2"
                  other="FIL1"
                  knobs={filterTwoKnobs}
                >
                  <AnalogCurve />
                </Filter>
              </SRow>
            </SVoice>
            <SMods>
              <EnvelopePanel />
              <LfoPanel />
              <SRow $gap={8}>
                <RandomPanel />
                <SModGrid>
                  {modSources.map((n) => (
                    <STile key={n} $h={142}>
                      {n}
                      {n === "VELOCITY" && <SPie $angle={85} />}
                    </STile>
                  ))}
                </SModGrid>
              </SRow>
              <SRow $gap={8}>
                <SPanel $w={624} $h={142}>
                  <SContent>
                    <SRow>
                      <ChoiceBox label="VOICES" w={125} digits>
                        8
                      </ChoiceBox>
                      <ChoiceBox label="BEND" w={125} digits>
                        2
                      </ChoiceBox>
                      <KnobCell label="VEL TRK" angle={0} />
                      <KnobCell label="SPREAD" angle={145} color={colors.purple} />
                    </SRow>
                  </SContent>
                </SPanel>
                <SPanel $w={544} $h={142}>
                  <SContent>
                    <SRow>
                      <KnobCell label="GLIDE" />
                      <ChoiceBox label="SLOPE" w={153}>
                        <SlopeIcon />
                      </ChoiceBox>
                      <SToggles>
                        <SToggle $w="100%">ALWAYS GLIDE</SToggle>
                        <SToggle $w="100%">OCTAVE SCALE</SToggle>
                        <SToggle $w="100%">LEGATO</SToggle>
                      </SToggles>
                    </SRow>
                  </SContent>
                </SPanel>
              </SRow>
            </SMods>
          </SColumns>
          <SKeyboard>
            <Keys />
          </SKeyboard>
        </SWork>
      </SFrame>
    </SApp>
  </>
);

export default App;
